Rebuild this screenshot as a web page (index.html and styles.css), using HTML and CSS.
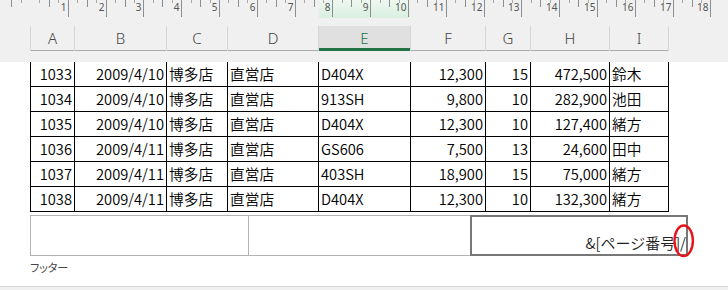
FILE: index.html
```html
<!DOCTYPE html>
<html lang="ja">
<head>
<meta charset="utf-8">
<title>フッター</title>
<link rel="stylesheet" href="styles.css">
</head>
<body>
<div class="app">
  <svg class="ruler" width="728" height="18" viewBox="0 0 728 18">
    <defs>
      <linearGradient id="selg" x1="0" y1="0" x2="0" y2="1">
        <stop offset="0" stop-color="#eef8f1"/>
        <stop offset="1" stop-color="#d9efe0"/>
      </linearGradient>
    </defs>
    <rect x="319" y="0" width="91" height="18" fill="url(#selg)"/>
    <path class="tick" d="M68.5 0V17M106.5 0V17M143.5 0V17M181.5 0V17M219.5 0V17M257.5 0V17M295.5 0V17M332.5 0V17M370.5 0V17M408.5 0V17M446.5 0V17M484.5 0V17M521.5 0V17M559.5 0V17M597.5 0V17M635.5 0V17M673.5 0V17M710.5 0V17"/>
    <path class="tick" d="M11.5 0V7M49.5 0V7M87.5 0V7M125.5 0V7M162.5 0V7M200.5 0V7M238.5 0V7M276.5 0V7M314.5 0V7M351.5 0V7M389.5 0V7M427.5 0V7M465.5 0V7M503.5 0V7M540.5 0V7M578.5 0V7M616.5 0V7M654.5 0V7M692.5 0V7"/>
    <path class="tick short" d="M21.5 0V3M39.5 0V3M58.5 0V3M77.5 0V3M96.5 0V3M115.5 0V3M134.5 0V3M153.5 0V3M172.5 0V3M191.5 0V3M210.5 0V3M228.5 0V3M247.5 0V3M266.5 0V3M285.5 0V3M304.5 0V3M323.5 0V3M342.5 0V3M361.5 0V3M380.5 0V3M399.5 0V3M417.5 0V3M436.5 0V3M455.5 0V3M474.5 0V3M493.5 0V3M512.5 0V3M531.5 0V3M550.5 0V3M569.5 0V3M588.5 0V3M606.5 0V3M625.5 0V3M644.5 0V3M663.5 0V3M682.5 0V3M701.5 0V3"/>
    <g class="rnum" text-anchor="end">
      <text x="66.5" y="10.5">1</text>
      <text x="104.5" y="10.5">2</text>
      <text x="141.5" y="10.5">3</text>
      <text x="179.5" y="10.5">4</text>
      <text x="217.5" y="10.5">5</text>
      <text x="255.5" y="10.5">6</text>
      <text x="293.5" y="10.5">7</text>
      <text x="330.5" y="10.5">8</text>
      <text x="368.5" y="10.5">9</text>
      <text x="406.5" y="10.5">10</text>
      <text x="444.5" y="10.5">11</text>
      <text x="482.5" y="10.5">12</text>
      <text x="519.5" y="10.5">13</text>
      <text x="557.5" y="10.5">14</text>
      <text x="595.5" y="10.5">15</text>
      <text x="633.5" y="10.5">16</text>
      <text x="671.5" y="10.5">17</text>
      <text x="708.5" y="10.5">18</text>
    </g>
  </svg>

  <div class="colhead">
    <div>A</div><div>B</div><div>C</div><div>D</div><div class="sel">E</div><div>F</div><div>G</div><div>H</div><div>I</div>
  </div>

  <div class="page">
    <div class="sheet">
      <div class="r">1033</div><div class="r">2009/4/10</div><div>博多店</div><div>直営店</div><div>D404X</div><div class="r">12,300</div><div class="r">15</div><div class="r">472,500</div><div>鈴木</div>
      <div class="r">1034</div><div class="r">2009/4/10</div><div>博多店</div><div>直営店</div><div>913SH</div><div class="r">9,800</div><div class="r">10</div><div class="r">282,900</div><div>池田</div>
      <div class="r">1035</div><div class="r">2009/4/10</div><div>博多店</div><div>直営店</div><div>D404X</div><div class="r">12,300</div><div class="r">10</div><div class="r">127,400</div><div>緒方</div>
      <div class="r">1036</div><div class="r">2009/4/11</div><div>博多店</div><div>直営店</div><div>GS606</div><div class="r">7,500</div><div class="r">13</div><div class="r">24,600</div><div>田中</div>
      <div class="r">1037</div><div class="r">2009/4/11</div><div>博多店</div><div>直営店</div><div>403SH</div><div class="r">18,900</div><div class="r">15</div><div class="r">75,000</div><div>緒方</div>
      <div class="r">1038</div><div class="r">2009/4/11</div><div>博多店</div><div>直営店</div><div>D404X</div><div class="r">12,300</div><div class="r">10</div><div class="r">132,300</div><div>緒方</div>
    </div>

    <div class="footer">
      <div class="f-left"></div>
      <div class="f-mid"></div>
      <div class="f-right">
        <span class="ftext">&amp;[ページ番号]/</span>
        <svg class="mark" width="24" height="36" viewBox="0 0 24 36">
          <ellipse cx="11.7" cy="17.8" rx="9.2" ry="15.3" fill="none" stroke="#e8141c" stroke-width="2.4"/>
        </svg>
      </div>
    </div>
    <div class="label">フッター</div>
  </div>
</div>
</body>
</html>
```
FILE: styles.css
```css
html, body {
  margin: 0;
  padding: 0;
}

body {
  width: 728px;
  height: 290px;
  overflow: hidden;
  background: #f0f0f0;
  font-family: "Noto Sans CJK JP", "Noto Sans", sans-serif;
  color: #000;
}

.ruler {
  display: block;
}

.ruler .tick {
  stroke: #8e8e8e;
  stroke-width: 1;
  fill: none;
}

.ruler .tick.short {
  stroke: #a8a8a8;
}

.ruler .rnum {
  font-family: "Noto Sans", sans-serif;
  font-size: 10px;
  fill: #555;
}

.colhead {
  display: grid;
  width: max-content;
  grid-template-columns: 43px 91px 60px 90px 91px 74px 44px 78px 58px;
  column-gap: 1px;
  padding: 0 1px;
  margin: 8px 0 0 30px;
  height: 25px;
  background: #d6d6d6;
}

.colhead div {
  box-sizing: border-box;
  background: #f0f0f0;
  border-bottom: 1px solid #ababab;
  display: flex;
  align-items: center;
  justify-content: center;
  font-family: "Noto Sans", sans-serif;
  font-size: 15px;
  font-weight: 300;
  color: #444;
}

.colhead .sel {
  background: #e0e0e0;
  border-bottom: 3px solid #217346;
  padding-top: 2px;
  color: #217346;
}

.page {
  margin-top: 11px;
  height: 224px;
  background: #fff;
  border-bottom: 1px solid #d4d4d4;
}

.sheet {
  display: grid;
  width: max-content;
  grid-template-columns: 43px 91px 60px 90px 91px 74px 44px 78px 58px;
  grid-auto-rows: 24px;
  gap: 1px;
  padding: 0 1px 1px 1px;
  margin-left: 30px;
  background: #000;
}

.sheet div {
  background: #fff;
  font-size: 14.7px;
  font-weight: 350;
  line-height: 24px;
  padding: 0 2px;
  white-space: nowrap;
  overflow: hidden;
}

.sheet .r {
  text-align: right;
}

.footer {
  display: flex;
  margin: 3px 0 0 30px;
  height: 41px;
}

.f-left {
  box-sizing: border-box;
  width: 219px;
  border: 1px solid #b4b4b4;
}

.f-mid {
  box-sizing: border-box;
  width: 221px;
  border-top: 1px solid #b4b4b4;
  border-bottom: 1px solid #b4b4b4;
}

.f-right {
  box-sizing: border-box;
  width: 218px;
  border: 2px solid #777;
  position: relative;
  display: flex;
  align-items: flex-end;
  justify-content: flex-end;
  padding-bottom: 1px;
}

.ftext {
  font-size: 15px;
  font-weight: 350;
  line-height: 20px;
  color: #222;
  white-space: nowrap;
}

.mark {
  position: absolute;
  left: 200px;
  top: 6px;
  overflow: visible;
}

.label {
  margin: 4px 0 0 30px;
  font-size: 11px;
  line-height: 14px;
  color: #444;
  font-feature-settings: "palt";
}
```
